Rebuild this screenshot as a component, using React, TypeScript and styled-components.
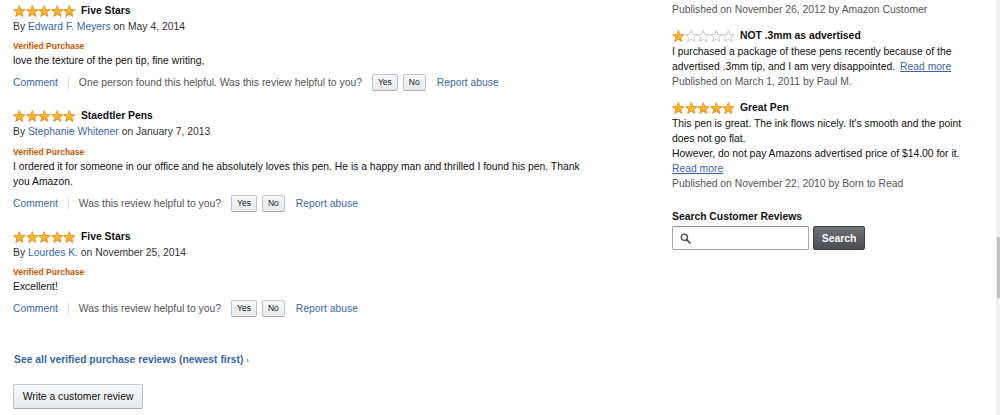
import React from 'react';
import styled, { createGlobalStyle } from 'styled-components';

const Global = createGlobalStyle`
  html, body {
    margin: 0;
    padding: 0;
    background: #fff;
  }
  body {
    font-family: "Liberation Sans", Arial, sans-serif;
    font-size: 10.35px;
    color: #111;
  }
`;

const LINK = '#3a66a8';

const S = {
  Page: styled.div`
    width: 1000px;
    height: 415px;
    display: flex;
    overflow: hidden;
  `,
  Content: styled.div`
    flex: 1;
    display: flex;
    padding-left: 13px;
  `,
  Left: styled.div`
    width: 659px;
    display: flex;
    flex-direction: column;
    padding-top: 3px;
  `,
  Right: styled.div`
    width: 300px;
    display: flex;
    flex-direction: column;
    padding-top: 2px;
  `,
  Review: styled.div`
    display: flex;
    flex-direction: column;
    margin-bottom: 17px;
  `,
  TitleRow: styled.div`
    display: flex;
    align-items: center;
    height: 15px;
  `,
  Title: styled.span`
    font-weight: bold;
    margin-left: 5px;
    color: #111;
  `,
  Byline: styled.div`
    line-height: 15px;
    margin-top: 1px;
    color: #333;
  `,
  Author: styled.a`
    color: ${LINK};
    text-decoration: none;
  `,
  Verified: styled.div<{ gap: number }>`
    font-size: 8.5px;
    font-weight: bold;
    color: #c45500;
    margin-top: ${p => p.gap}px;
    line-height: 12px;
  `,
  Body: styled.div`
    max-width: 585px;
    line-height: 15px;
    color: #111;
    margin-top: 1px;
  `,
  Actions: styled.div`
    display: flex;
    align-items: center;
    height: 18px;
    margin-top: 5px;
    color: #555;
  `,
  ActionLink: styled.a`
    color: ${LINK};
    text-decoration: none;
  `,
  Divider: styled.span`
    width: 1px;
    height: 13px;
    background: #ddd;
    margin: 0 10px 0 10px;
  `,
  SmallButton: styled.button<{ first?: boolean }>`
    font-family: "Liberation Sans", Arial, sans-serif;
    font-size: 8.5px;
    color: #111;
    height: 17px;
    padding: 0 5px;
    margin-left: ${p => (p.first ? 10 : 5)}px;
    border: 1px solid #adb1b8;
    border-color: #c6c9ce #bfc2c6 #a9acb1;
    border-radius: 2px;
    background: linear-gradient(#f7f8fa, #e7e9ec);
  `,
  ReportLink: styled.a`
    color: ${LINK};
    text-decoration: none;
    margin-left: 11px;
  `,
  SeeAll: styled.a`
    color: ${LINK};
    font-weight: bold;
    text-decoration: none;
    margin-top: 19px;
    margin-left: 1px;
    line-height: 14px;
  `,
  Caret: styled.span`
    font-size: 7px;
    margin-left: 3px;
    color: #777;
  `,
  WriteButton: styled.button`
    align-self: flex-start;
    font-family: "Liberation Sans", Arial, sans-serif;
    font-size: 10.35px;
    color: #111;
    width: 130px;
    height: 25px;
    margin-top: 16px;
    border: 1px solid #adb1b8;
    border-color: #c6c9ce #bfc2c6 #a2a6ac;
    border-radius: 2px;
    background: linear-gradient(#f7f8fa, #e7e9ec);
  `,
  Published: styled.div`
    color: #555;
    line-height: 15px;
  `,
  SideReview: styled.div`
    display: flex;
    flex-direction: column;
    margin-top: 12px;
  `,
  SideTitleRow: styled.div`
    display: flex;
    align-items: center;
    height: 15px;
    margin-top: -1px;
    margin-bottom: 1px;
  `,
  SideBody: styled.div`
    line-height: 15px;
    color: #111;
  `,
  ReadMore: styled.a<{ spaced?: boolean }>`
    color: ${LINK};
    text-decoration: underline;
    margin-left: ${p => (p.spaced ? 5 : 0)}px;
  `,
  SearchTitle: styled.div`
    font-weight: bold;
    color: #111;
    margin-top: 19px;
    line-height: 14px;
  `,
  SearchRow: styled.div`
    display: flex;
    align-items: center;
    margin-top: 2px;
  `,
  InputBox: styled.div`
    box-sizing: border-box;
    width: 137px;
    height: 24px;
    border: 1px solid #a6a6a6;
    border-top-color: #949494;
    border-radius: 2px;
    display: flex;
    align-items: center;
    padding-left: 7px;
    box-shadow: inset 0 1px 0 rgba(0, 0, 0, 0.05);
  `,
  SearchButton: styled.button`
    font-family: "Liberation Sans", Arial, sans-serif;
    font-size: 10.35px;
    font-weight: bold;
    color: #fff;
    width: 52px;
    height: 24px;
    margin-left: 4px;
    border: 1px solid #3d3f44;
    border-radius: 2px;
    background: linear-gradient(#6f7277, #4a4c51);
  `,
  Scrollbar: styled.div`
    width: 4px;
    height: 415px;
    background: #f1f1f1;
    display: flex;
    flex-direction: column;
  `,
  Thumb: styled.div`
    width: 3px;
    margin-left: 1px;
    height: 61px;
    margin-top: 237px;
    background: #c1c1c1;
  `,
};

const Star = ({ filled }: { filled: boolean }) => (
  <svg width="12.6" height="12" viewBox="0 0 24 23">
    <defs>
      <linearGradient id="gold" x1="0" y1="0" x2="0" y2="1">
        <stop offset="0" stopColor="#ffd23f" />
        <stop offset="1" stopColor="#f7a21b" />
      </linearGradient>
    </defs>
    <polygon
      points="12,1 15,8.6 23,9 16.8,14.2 18.8,22 12,17.6 5.2,22 7.2,14.2 1,9 9,8.6"
      fill={filled ? 'url(#gold)' : '#fff'}
      stroke={filled ? '#de7a10' : '#b8b8b8'}
      strokeWidth="1.4"
      strokeLinejoin="round"
    />
  </svg>
);

const Stars = ({ count }: { count: number }) => (
  <>
    {[0, 1, 2, 3, 4].map(i => <Star key={i} filled={i < count} />)}
  </>
);

interface IReview {
  title: string
  author: string
  date: string
  text: string
  helpful?: string
  verifiedGap: number
}

const REVIEWS: IReview[] = [
  {
    title: 'Five Stars',
    author: 'Edward F. Meyers',
    date: 'May 4, 2014',
    text: 'love the texture of the pen tip, fine writing,',
    helpful: 'One person found this helpful. ',
    verifiedGap: 6,
  },
  {
    title: 'Staedtler Pens',
    author: 'Stephanie Whitener',
    date: 'January 7, 2013',
    text: 'I ordered it for someone in our office and he absolutely loves this pen. He is a happy man and thrilled I found his pen. Thank you Amazon.',
    verifiedGap: 7,
  },
  {
    title: 'Five Stars',
    author: 'Lourdes K.',
    date: 'November 25, 2014',
    text: 'Excellent!',
    verifiedGap: 6,
  },
];

const Search = () => (
  <svg width="11" height="11" viewBox="0 0 12 12">
    <circle cx="4.8" cy="4.8" r="3.4" fill="none" stroke="#555" strokeWidth="1.6" />
    <line x1="7.4" y1="7.4" x2="10.8" y2="10.8" stroke="#555" strokeWidth="2" strokeLinecap="round" />
  </svg>
);

const App = () => {
  return (
    <S.Page>
      <Global />
      <S.Content>
        <S.Left>
          {REVIEWS.map((r, idx) => (
            <S.Review key={idx}>
              <S.TitleRow>
                <Stars count={5} />
                <S.Title>{r.title}</S.Title>
              </S.TitleRow>
              <S.Byline>
                By <S.Author href="#">{r.author}</S.Author> on {r.date}
              </S.Byline>
              <S.Verified gap={r.verifiedGap}>Verified Purchase</S.Verified>
              <S.Body>{r.text}</S.Body>
              <S.Actions>
                <S.ActionLink href="#">Comment</S.ActionLink>
                <S.Divider />
                <span>{r.helpful}Was this review helpful to you?</span>
                <S.SmallButton first>Yes</S.SmallButton>
                <S.SmallButton>No</S.SmallButton>
                <S.ReportLink href="#">Report abuse</S.ReportLink>
              </S.Actions>
            </S.Review>
          ))}
          <S.SeeAll href="#">
            See all verified purchase reviews (newest first)<S.Caret>›</S.Caret>
          </S.SeeAll>
          <S.WriteButton>Write a customer review</S.WriteButton>
        </S.Left>
        <S.Right>
          <S.Published>Published on November 26, 2012 by Amazon Customer</S.Published>
          <S.SideReview>
            <S.SideTitleRow>
              <Stars count={1} />
              <S.Title>NOT .3mm as advertised</S.Title>
            </S.SideTitleRow>
            <S.SideBody>
              I purchased a package of these pens recently because of the advertised .3mm tip, and I am very disappointed.
              <S.ReadMore href="#" spaced>Read more</S.ReadMore>
            </S.SideBody>
            <S.Published>Published on March 1, 2011 by Paul M.</S.Published>
          </S.SideReview>
          <S.SideReview>
            <S.SideTitleRow>
              <Stars count={5} />
              <S.Title>Great Pen</S.Title>
            </S.SideTitleRow>
            <S.SideBody>
              This pen is great. The ink flows nicely. It's smooth and the point does not go flat.
              <br />
              However, do not pay Amazons advertised price of $14.00 for it.
              <br />
              <S.ReadMore href="#">Read more</S.ReadMore>
            </S.SideBody>
            <S.Published>Published on November 22, 2010 by Born to Read</S.Published>
          </S.SideReview>
          <S.SearchTitle>Search Customer Reviews</S.SearchTitle>
          <S.SearchRow>
            <S.InputBox>
              <Search />
            </S.InputBox>
            <S.SearchButton>Search</S.SearchButton>
          </S.SearchRow>
        </S.Right>
      </S.Content>
      <S.Scrollbar>
        <S.Thumb />
      </S.Scrollbar>
    </S.Page>
  );
};

export default App;
